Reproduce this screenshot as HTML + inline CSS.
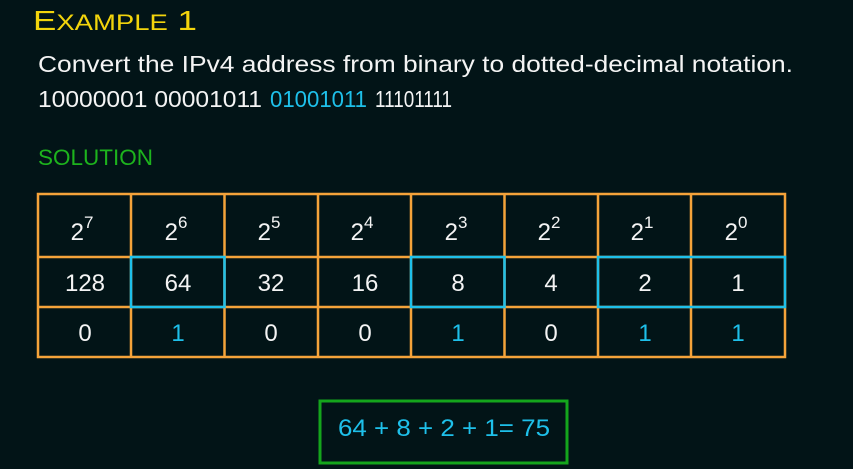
<!DOCTYPE html>
<html><head><style>
html,body{margin:0;padding:0;background:#021417;width:853px;height:469px;overflow:hidden}
svg{display:block}
text{font-family:"Liberation Sans",sans-serif}
</style></head><body>
<svg width="853" height="469" viewBox="0 0 853 469">
<rect width="853" height="469" fill="#021417"/>
<text x="33" y="30" font-size="28" fill="#f2d40c" textLength="164" lengthAdjust="spacingAndGlyphs">E<tspan font-size="22">XAMPLE</tspan> 1</text>
<text x="38" y="72" font-size="23" fill="#f4f4f4" textLength="755" lengthAdjust="spacingAndGlyphs">Convert the IPv4 address from binary to dotted-decimal notation.</text>
<text x="38" y="107" font-size="23" fill="#f4f4f4" textLength="224" lengthAdjust="spacingAndGlyphs">10000001 00001011</text>
<text x="270" y="107" font-size="23" fill="#1ec0ea" textLength="97" lengthAdjust="spacingAndGlyphs">01001011</text>
<text x="375" y="107" font-size="23" fill="#f4f4f4" textLength="77" lengthAdjust="spacingAndGlyphs">11101111</text>
<text x="38" y="165" font-size="22" fill="#1db31d" textLength="115" lengthAdjust="spacingAndGlyphs">SOLUTION</text>
<g stroke="#f5a33a" stroke-width="2.5" fill="none">
<rect x="38" y="194" width="747" height="163"/>
<line x1="38" y1="257" x2="785" y2="257"/>
<line x1="38" y1="307" x2="785" y2="307"/>
<line x1="131" y1="194" x2="131" y2="357"/>
<line x1="224.5" y1="194" x2="224.5" y2="357"/>
<line x1="318" y1="194" x2="318" y2="357"/>
<line x1="411" y1="194" x2="411" y2="357"/>
<line x1="504.5" y1="194" x2="504.5" y2="357"/>
<line x1="598" y1="194" x2="598" y2="357"/>
<line x1="691" y1="194" x2="691" y2="357"/>
</g>
<g stroke="#1ec0ea" stroke-width="2.5" fill="none">
<rect x="131" y="257" width="93.5" height="50"/>
<rect x="411" y="257" width="93.5" height="50"/>
<rect x="598" y="257" width="187" height="50"/>
</g>
<g font-size="24" fill="#f4f4f4" text-anchor="middle">
<text x="82" y="240">2<tspan font-size="17" dy="-12">7</tspan></text>
<text x="176" y="240">2<tspan font-size="17" dy="-12">6</tspan></text>
<text x="269" y="240">2<tspan font-size="17" dy="-12">5</tspan></text>
<text x="362" y="240">2<tspan font-size="17" dy="-12">4</tspan></text>
<text x="456" y="240">2<tspan font-size="17" dy="-12">3</tspan></text>
<text x="549" y="240">2<tspan font-size="17" dy="-12">2</tspan></text>
<text x="642" y="240">2<tspan font-size="17" dy="-12">1</tspan></text>
<text x="736" y="240">2<tspan font-size="17" dy="-12">0</tspan></text>
<text x="85" y="291">128</text>
<text x="178" y="291">64</text>
<text x="271" y="291">32</text>
<text x="365" y="291">16</text>
<text x="458" y="291">8</text>
<text x="551" y="291">4</text>
<text x="645" y="291">2</text>
<text x="738" y="291">1</text>
<text x="85" y="341">0</text>
<text x="178" y="341" fill="#1ec0ea">1</text>
<text x="271" y="341">0</text>
<text x="365" y="341">0</text>
<text x="458" y="341" fill="#1ec0ea">1</text>
<text x="551" y="341">0</text>
<text x="645" y="341" fill="#1ec0ea">1</text>
<text x="738" y="341" fill="#1ec0ea">1</text>
</g>
<rect x="320" y="401" width="247" height="62" fill="none" stroke="#14a51c" stroke-width="3"/>
<text x="338" y="436" font-size="24" fill="#1ec0ea" textLength="212" lengthAdjust="spacingAndGlyphs">64 + 8 + 2 + 1= 75</text>
</svg>
</body></html>
